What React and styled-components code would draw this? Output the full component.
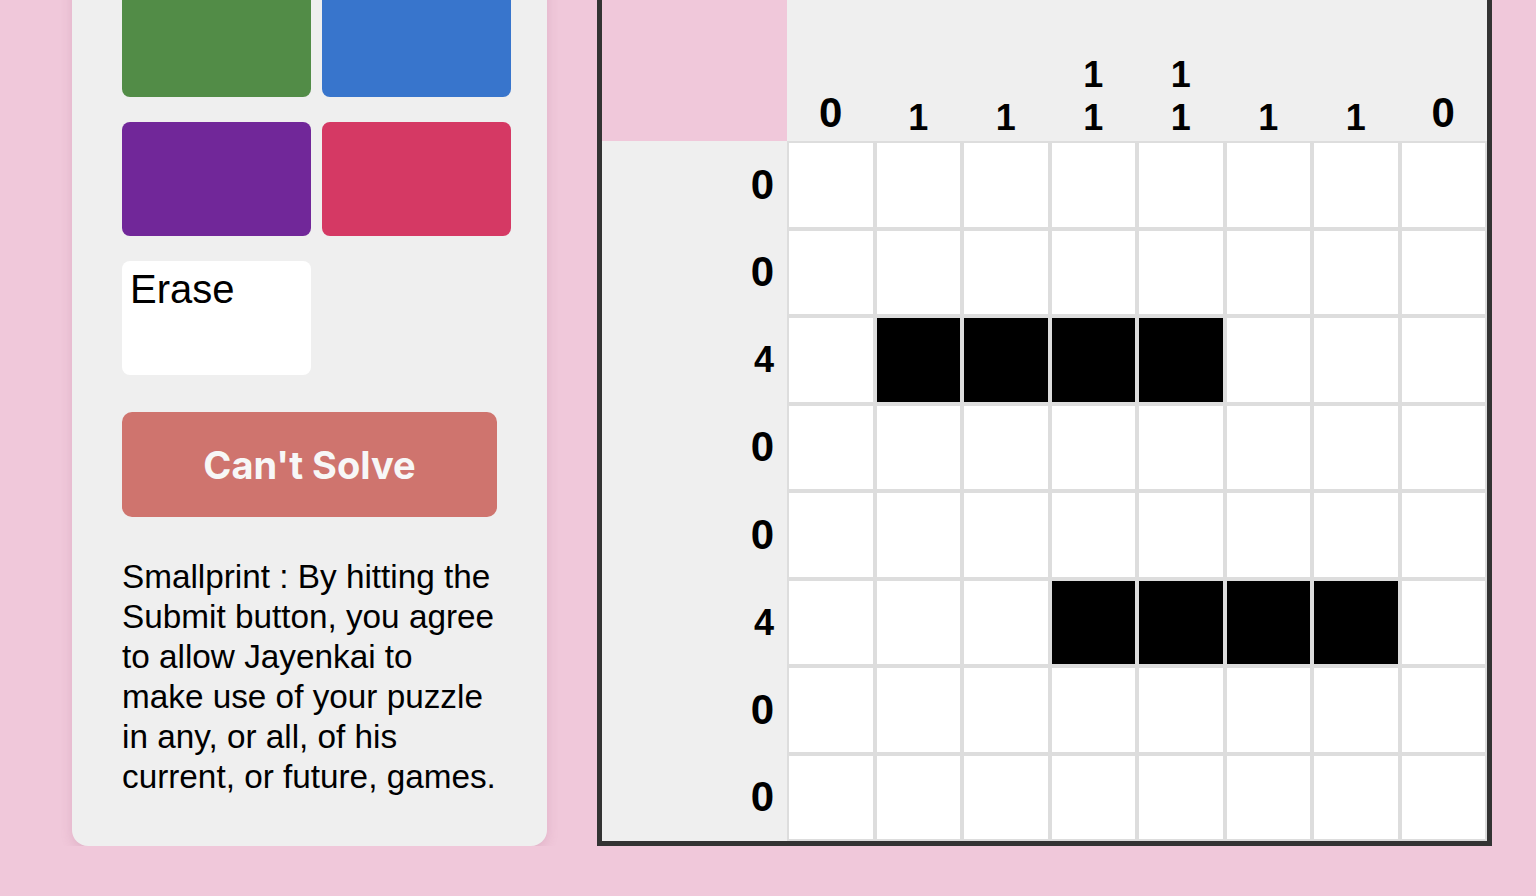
import React from "react";
import styled, { createGlobalStyle } from "styled-components";

const GlobalStyle = createGlobalStyle`
  body {
    margin: 0;
    background: #f0c8da;
    font-family: "Liberation Sans", Arial, sans-serif;
    overflow: hidden;
  }
`;

const Page = styled.div`
  display: flex;
  align-items: flex-end;
  gap: 50px;
  margin-top: -67px;
  padding-left: 72px;
`;

const Panel = styled.div`
  width: 475px;
  box-sizing: border-box;
  padding: 50px 50px 49px;
  background: #efefef;
  border-radius: 16px;
  box-shadow: 0 4px 12px rgba(150, 80, 110, 0.18);
`;

const Palette = styled.div`
  display: grid;
  grid-template-columns: 189px 189px;
  column-gap: 11px;
  row-gap: 25px;
`;

const Swatch = styled.div`
  height: 114px;
  border-radius: 8px;
  background: ${(p) => p.$color};
`;

const EraseTile = styled.div`
  height: 114px;
  box-sizing: border-box;
  padding: 6px 8px;
  border-radius: 8px;
  background: #fff;
  color: #000;
  font-size: 40px;
`;

const SolveButton = styled.button`
  display: block;
  width: 375px;
  height: 105px;
  margin: 37px 0 40px;
  border: none;
  border-radius: 10px;
  background: #cf746e;
  color: #f7f7f7;
  font-family: Inter, "Liberation Sans", sans-serif;
  font-weight: 700;
  font-size: 38px;
`;

const Smallprint = styled.p`
  width: 375px;
  margin: 0;
  font-size: 33.3px;
  line-height: 40px;
  color: #000;
`;

const Board = styled.div`
  display: grid;
  grid-template-columns: 185px repeat(8, 87.5px);
  grid-template-rows: 180px repeat(8, 87.5px);
  border: 5px solid #333;
`;

const Corner = styled.div`
  background: #f0c8da;
`;

const ColClue = styled.div`
  display: flex;
  flex-direction: column;
  justify-content: flex-end;
  align-items: center;
  padding-bottom: 2px;
  background: #efefef;
`;

const RowClue = styled.div`
  display: flex;
  justify-content: flex-end;
  align-items: center;
  padding-right: 13px;
  background: #efefef;
`;

const Num = styled.span`
  font-weight: 700;
  font-size: ${(p) => (p.$zero ? "42px" : "36px")};
  line-height: ${(p) => (p.$zero ? "52px" : "43px")};
  color: #000;
`;

const Cell = styled.div`
  box-sizing: border-box;
  border: 2px solid #ddd;
  background: ${(p) => (p.$on ? "#000" : "#fff")};
`;

const colClues = [[0], [1], [1], [1, 1], [1, 1], [1], [1], [0]];
const rowClues = [0, 0, 4, 0, 0, 4, 0, 0];
const filled = [
  [0, 0, 0, 0, 0, 0, 0, 0],
  [0, 0, 0, 0, 0, 0, 0, 0],
  [0, 1, 1, 1, 1, 0, 0, 0],
  [0, 0, 0, 0, 0, 0, 0, 0],
  [0, 0, 0, 0, 0, 0, 0, 0],
  [0, 0, 0, 1, 1, 1, 1, 0],
  [0, 0, 0, 0, 0, 0, 0, 0],
  [0, 0, 0, 0, 0, 0, 0, 0],
];

export default function App() {
  return (
    <>
      <GlobalStyle />
      <Page>
        <Panel>
          <Palette>
            <Swatch $color="#528c47" />
            <Swatch $color="#3875cc" />
            <Swatch $color="#712799" />
            <Swatch $color="#d53964" />
            <EraseTile>Erase</EraseTile>
          </Palette>
          <SolveButton>Can't Solve</SolveButton>
          <Smallprint>
            Smallprint : By hitting the Submit button, you agree to allow
            Jayenkai to make use of your puzzle in any, or all, of his current,
            or future, games.
          </Smallprint>
        </Panel>

        <Board>
          <Corner />
          {colClues.map((nums, i) => (
            <ColClue key={"c" + i}>
              {nums.map((n, j) => (
                <Num key={j} $zero={n === 0}>
                  {n}
                </Num>
              ))}
            </ColClue>
          ))}
          {filled.map((row, r) => (
            <React.Fragment key={"r" + r}>
              <RowClue>
                <Num $zero={rowClues[r] === 0}>{rowClues[r]}</Num>
              </RowClue>
              {row.map((v, c) => (
                <Cell key={c} $on={v === 1} />
              ))}
            </React.Fragment>
          ))}
        </Board>
      </Page>
    </>
  );
}
